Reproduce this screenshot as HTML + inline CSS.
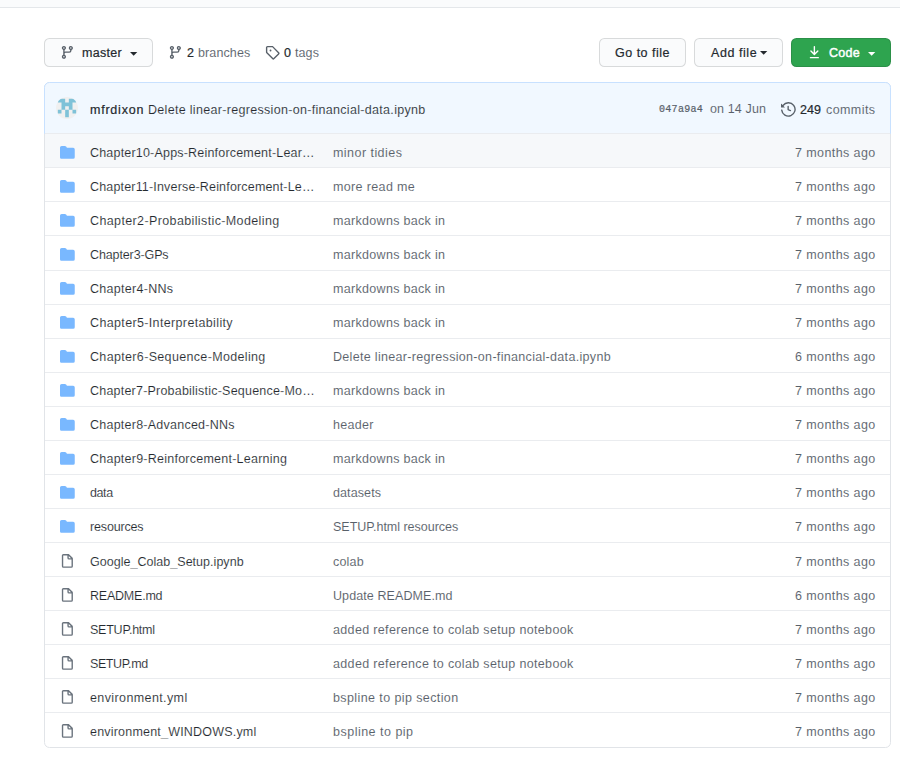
<!DOCTYPE html>
<html><head><meta charset="utf-8">
<style>
*{box-sizing:border-box;margin:0;padding:0}
html,body{width:900px;height:759px;background:#fff;overflow:hidden}
body{font-family:"Liberation Sans",sans-serif;font-size:12.5px;color:#24292e;position:relative}
.topbar{position:absolute;left:0;top:0;width:900px;height:8px;background:#fafbfc;border-bottom:1px solid #e4e7ea}
.btn{position:absolute;top:38px;height:29px;border:1px solid rgba(27,31,35,.15);border-radius:5.5px;background:#fafbfc}
.btn.green{background:#2ea44f}
.t{position:absolute;white-space:nowrap;line-height:20px;height:20px;-webkit-text-stroke:0.12px #fff}
.muted{color:#586069;-webkit-text-stroke-width:0.07px}
svg{position:absolute;display:block}
.box{position:absolute;left:44px;top:82px;width:847px;height:666px;border:1px solid #e1e4e8;border-radius:5.5px}
.hdr{position:absolute;left:44px;top:82px;width:847px;height:52px;background:#f1f8ff;border:1px solid #c8e1ff;border-radius:5.5px 5.5px 0 0}
.row{position:absolute;left:45px;width:845px;border-top:1px solid #eaecef}
.sb{-webkit-text-stroke:0.2px}
.md{-webkit-text-stroke:0.2px}
.mono{font-family:"Liberation Mono",monospace;font-size:10px}
.nm{overflow:hidden;text-overflow:ellipsis}
.row svg.ic{left:15px;top:11px}
.avatar{position:absolute;left:56px;top:97px;width:22px;height:22px;border-radius:50%;background:#f0f0f0;overflow:hidden}
</style></head><body>
<div class="topbar"></div>

<div class="btn" style="left:44px;width:109px"></div>
<div class="btn" style="left:599px;width:87px"></div>
<div class="btn" style="left:694px;width:89px"></div>
<div class="btn green" style="left:791px;width:100px"></div>

<svg viewBox="0 0 16 16" width="14.75" height="14.75" style="left:60px;top:45px"><path fill="#586069" fill-rule="evenodd" d="M11.75 2.5a.75.75 0 100 1.5.75.75 0 000-1.5zm-2.25.75a2.25 2.25 0 113 2.122V6A2.5 2.5 0 0110 8.5H6a1 1 0 00-1 1v1.128a2.251 2.251 0 11-1.5 0V5.372a2.25 2.25 0 111.5 0v1.836A2.492 2.492 0 016 7h4a1 1 0 001-1v-.628A2.25 2.25 0 019.5 3.25zM4.25 12a.75.75 0 100 1.5.75.75 0 000-1.5zM3.5 3.25a.75.75 0 111.5 0 .75.75 0 01-1.5 0z"/></svg>
<svg width="8" height="4" viewBox="0 0 8 4" style="left:129.8px;top:51.9px"><path fill="#24292e" d="M0 0h7.3L3.65 3.65z"/></svg>

<svg viewBox="0 0 16 16" width="14.75" height="14.75" style="left:168.3px;top:45px"><path fill="#586069" fill-rule="evenodd" d="M11.75 2.5a.75.75 0 100 1.5.75.75 0 000-1.5zm-2.25.75a2.25 2.25 0 113 2.122V6A2.5 2.5 0 0110 8.5H6a1 1 0 00-1 1v1.128a2.251 2.251 0 11-1.5 0V5.372a2.25 2.25 0 111.5 0v1.836A2.492 2.492 0 016 7h4a1 1 0 001-1v-.628A2.25 2.25 0 019.5 3.25zM4.25 12a.75.75 0 100 1.5.75.75 0 000-1.5zM3.5 3.25a.75.75 0 111.5 0 .75.75 0 01-1.5 0z"/></svg>
<svg viewBox="0 0 16 16" width="14.75" height="14.75" style="left:265px;top:45px"><path fill="#586069" fill-rule="evenodd" d="M2.5 7.775V2.75a.25.25 0 01.25-.25h5.025a.25.25 0 01.177.073l6.25 6.25a.25.25 0 010 .354l-5.025 5.025a.25.25 0 01-.354 0l-6.25-6.25a.25.25 0 01-.073-.177zm-1.5 0V2.75C1 1.784 1.784 1 2.75 1h5.025c.464 0 .91.184 1.238.513l6.25 6.25a1.75 1.75 0 010 2.474l-5.026 5.026a1.75 1.75 0 01-2.474 0l-6.25-6.25A1.75 1.75 0 011 7.775zM6 5a1 1 0 100 2 1 1 0 000-2z"/></svg>

<svg width="8" height="4" viewBox="0 0 8 4" style="left:759.8px;top:50.6px"><path fill="#24292e" d="M0 0h7.3L3.65 3.65z"/></svg>
<svg viewBox="0 0 16 16" width="14.75" height="14.75" style="left:807px;top:45px"><path fill="#fff" fill-rule="evenodd" d="M7.47 10.78a.75.75 0 001.06 0l3.75-3.75a.75.75 0 00-1.06-1.06L8.75 8.44V1.75a.75.75 0 00-1.5 0v6.69L4.78 5.97a.75.75 0 00-1.06 1.06l3.75 3.75zM3.75 13a.75.75 0 000 1.5h8.5a.75.75 0 000-1.5h-8.5z"/></svg>
<svg width="8" height="4" viewBox="0 0 8 4" style="left:867.8px;top:51.9px"><path fill="#fff" d="M0 0h7.3L3.65 3.65z"/></svg>

<div class="box"></div>
<div class="hdr"></div>
<div class="avatar"><svg viewBox="0 0 6 6" width="22" height="22" style="left:0;top:0"><path fill="#7fc2d8" transform="translate(.5 .5)" d="M0 0h2v1h-2zM3 0h2v1h-2zM1 0h1v3h-1zM3 0h1v3h-1zM1 1h3v1h-3zM0 3h1v1h-1zM4 3h1v1h-1zM2 3h1v2h-1z"/></svg></div>
<svg viewBox="0 0 16 16" width="14.75" height="14.75" style="left:781px;top:102px"><path fill="#586069" fill-rule="evenodd" d="M1.643 3.143L.427 1.927A.25.25 0 000 2.104V5.75c0 .138.112.25.25.25h3.646a.25.25 0 00.177-.427L2.715 4.215a6.5 6.5 0 11-1.18 4.458.75.75 0 10-1.493.154 8.001 8.001 0 101.6-5.684zM7.750 4a.75.75 0 01.75.75v2.992l2.028.812a.75.75 0 01-.557 1.392l-2.5-1A.75.75 0 017 8.25v-3.5A.75.75 0 017.75 4z"/></svg>

<div class="row" style="top:133px;height:34px;background:#f6f8fa"><svg class="ic" style="top:11px" viewBox="0 0 16 16" width="14.75" height="14.75"><path fill="#79b8ff" d="M1.75 1A1.75 1.75 0 000 2.75v10.5C0 14.216.784 15 1.75 15h12.5A1.75 1.75 0 0016 13.25v-8.5A1.75 1.75 0 0014.25 3h-6.5a.25.25 0 01-.2-.1l-.9-1.2c-.33-.44-.85-.7-1.4-.7h-3.5z"/></svg></div>
<div class="row" style="top:167px;height:34px"><svg class="ic" style="top:11px" viewBox="0 0 16 16" width="14.75" height="14.75"><path fill="#79b8ff" d="M1.75 1A1.75 1.75 0 000 2.75v10.5C0 14.216.784 15 1.75 15h12.5A1.75 1.75 0 0016 13.25v-8.5A1.75 1.75 0 0014.25 3h-6.5a.25.25 0 01-.2-.1l-.9-1.2c-.33-.44-.85-.7-1.4-.7h-3.5z"/></svg></div>
<div class="row" style="top:201px;height:34px"><svg class="ic" style="top:11px" viewBox="0 0 16 16" width="14.75" height="14.75"><path fill="#79b8ff" d="M1.75 1A1.75 1.75 0 000 2.75v10.5C0 14.216.784 15 1.75 15h12.5A1.75 1.75 0 0016 13.25v-8.5A1.75 1.75 0 0014.25 3h-6.5a.25.25 0 01-.2-.1l-.9-1.2c-.33-.44-.85-.7-1.4-.7h-3.5z"/></svg></div>
<div class="row" style="top:235px;height:35px"><svg class="ic" style="top:11px" viewBox="0 0 16 16" width="14.75" height="14.75"><path fill="#79b8ff" d="M1.75 1A1.75 1.75 0 000 2.75v10.5C0 14.216.784 15 1.75 15h12.5A1.75 1.75 0 0016 13.25v-8.5A1.75 1.75 0 0014.25 3h-6.5a.25.25 0 01-.2-.1l-.9-1.2c-.33-.44-.85-.7-1.4-.7h-3.5z"/></svg></div>
<div class="row" style="top:270px;height:34px"><svg class="ic" style="top:10px" viewBox="0 0 16 16" width="14.75" height="14.75"><path fill="#79b8ff" d="M1.75 1A1.75 1.75 0 000 2.75v10.5C0 14.216.784 15 1.75 15h12.5A1.75 1.75 0 0016 13.25v-8.5A1.75 1.75 0 0014.25 3h-6.5a.25.25 0 01-.2-.1l-.9-1.2c-.33-.44-.85-.7-1.4-.7h-3.5z"/></svg></div>
<div class="row" style="top:304px;height:34px"><svg class="ic" style="top:10px" viewBox="0 0 16 16" width="14.75" height="14.75"><path fill="#79b8ff" d="M1.75 1A1.75 1.75 0 000 2.75v10.5C0 14.216.784 15 1.75 15h12.5A1.75 1.75 0 0016 13.25v-8.5A1.75 1.75 0 0014.25 3h-6.5a.25.25 0 01-.2-.1l-.9-1.2c-.33-.44-.85-.7-1.4-.7h-3.5z"/></svg></div>
<div class="row" style="top:338px;height:34px"><svg class="ic" style="top:10px" viewBox="0 0 16 16" width="14.75" height="14.75"><path fill="#79b8ff" d="M1.75 1A1.75 1.75 0 000 2.75v10.5C0 14.216.784 15 1.75 15h12.5A1.75 1.75 0 0016 13.25v-8.5A1.75 1.75 0 0014.25 3h-6.5a.25.25 0 01-.2-.1l-.9-1.2c-.33-.44-.85-.7-1.4-.7h-3.5z"/></svg></div>
<div class="row" style="top:372px;height:34px"><svg class="ic" style="top:10px" viewBox="0 0 16 16" width="14.75" height="14.75"><path fill="#79b8ff" d="M1.75 1A1.75 1.75 0 000 2.75v10.5C0 14.216.784 15 1.75 15h12.5A1.75 1.75 0 0016 13.25v-8.5A1.75 1.75 0 0014.25 3h-6.5a.25.25 0 01-.2-.1l-.9-1.2c-.33-.44-.85-.7-1.4-.7h-3.5z"/></svg></div>
<div class="row" style="top:406px;height:34px"><svg class="ic" style="top:10px" viewBox="0 0 16 16" width="14.75" height="14.75"><path fill="#79b8ff" d="M1.75 1A1.75 1.75 0 000 2.75v10.5C0 14.216.784 15 1.75 15h12.5A1.75 1.75 0 0016 13.25v-8.5A1.75 1.75 0 0014.25 3h-6.5a.25.25 0 01-.2-.1l-.9-1.2c-.33-.44-.85-.7-1.4-.7h-3.5z"/></svg></div>
<div class="row" style="top:440px;height:34px"><svg class="ic" style="top:10px" viewBox="0 0 16 16" width="14.75" height="14.75"><path fill="#79b8ff" d="M1.75 1A1.75 1.75 0 000 2.75v10.5C0 14.216.784 15 1.75 15h12.5A1.75 1.75 0 0016 13.25v-8.5A1.75 1.75 0 0014.25 3h-6.5a.25.25 0 01-.2-.1l-.9-1.2c-.33-.44-.85-.7-1.4-.7h-3.5z"/></svg></div>
<div class="row" style="top:474px;height:34px"><svg class="ic" style="top:10px" viewBox="0 0 16 16" width="14.75" height="14.75"><path fill="#79b8ff" d="M1.75 1A1.75 1.75 0 000 2.75v10.5C0 14.216.784 15 1.75 15h12.5A1.75 1.75 0 0016 13.25v-8.5A1.75 1.75 0 0014.25 3h-6.5a.25.25 0 01-.2-.1l-.9-1.2c-.33-.44-.85-.7-1.4-.7h-3.5z"/></svg></div>
<div class="row" style="top:508px;height:34px"><svg class="ic" style="top:10px" viewBox="0 0 16 16" width="14.75" height="14.75"><path fill="#79b8ff" d="M1.75 1A1.75 1.75 0 000 2.75v10.5C0 14.216.784 15 1.75 15h12.5A1.75 1.75 0 0016 13.25v-8.5A1.75 1.75 0 0014.25 3h-6.5a.25.25 0 01-.2-.1l-.9-1.2c-.33-.44-.85-.7-1.4-.7h-3.5z"/></svg></div>
<div class="row" style="top:542px;height:34px"><svg class="ic" style="top:11px" viewBox="0 0 16 16" width="14.75" height="14.75"><path fill="#6a737d" fill-rule="evenodd" d="M3.75 1.5a.25.25 0 00-.25.25v11.5c0 .138.112.25.25.25h8.5a.25.25 0 00.25-.25V6H9.75A1.75 1.75 0 018 4.25V1.5H3.75zm5.75.56v2.19c0 .138.112.25.25.25h2.19L9.500 2.060zM2 1.75C2 .784 2.784 0 3.75 0h5.086c.464 0 .909.184 1.237.513l3.414 3.414c.329.328.513.773.513 1.237v8.086A1.75 1.750 0 0112.25 15h-8.5A1.75 1.75 0 012 13.25V1.75z"/></svg></div>
<div class="row" style="top:576px;height:34px"><svg class="ic" style="top:11px" viewBox="0 0 16 16" width="14.75" height="14.75"><path fill="#6a737d" fill-rule="evenodd" d="M3.75 1.5a.25.25 0 00-.25.25v11.5c0 .138.112.25.25.25h8.5a.25.25 0 00.25-.25V6H9.75A1.75 1.75 0 018 4.25V1.5H3.75zm5.75.56v2.19c0 .138.112.25.25.25h2.19L9.500 2.060zM2 1.75C2 .784 2.784 0 3.75 0h5.086c.464 0 .909.184 1.237.513l3.414 3.414c.329.328.513.773.513 1.237v8.086A1.75 1.750 0 0112.25 15h-8.5A1.75 1.75 0 012 13.25V1.75z"/></svg></div>
<div class="row" style="top:610px;height:34px"><svg class="ic" style="top:11px" viewBox="0 0 16 16" width="14.75" height="14.75"><path fill="#6a737d" fill-rule="evenodd" d="M3.75 1.5a.25.25 0 00-.25.25v11.5c0 .138.112.25.25.25h8.5a.25.25 0 00.25-.25V6H9.75A1.75 1.75 0 018 4.25V1.5H3.75zm5.75.56v2.19c0 .138.112.25.25.25h2.19L9.500 2.060zM2 1.75C2 .784 2.784 0 3.75 0h5.086c.464 0 .909.184 1.237.513l3.414 3.414c.329.328.513.773.513 1.237v8.086A1.75 1.750 0 0112.25 15h-8.5A1.75 1.75 0 012 13.25V1.75z"/></svg></div>
<div class="row" style="top:644px;height:34px"><svg class="ic" style="top:11px" viewBox="0 0 16 16" width="14.75" height="14.75"><path fill="#6a737d" fill-rule="evenodd" d="M3.75 1.5a.25.25 0 00-.25.25v11.5c0 .138.112.25.25.25h8.5a.25.25 0 00.25-.25V6H9.75A1.75 1.75 0 018 4.25V1.5H3.75zm5.75.56v2.19c0 .138.112.25.25.25h2.19L9.500 2.060zM2 1.75C2 .784 2.784 0 3.75 0h5.086c.464 0 .909.184 1.237.513l3.414 3.414c.329.328.513.773.513 1.237v8.086A1.75 1.750 0 0112.25 15h-8.5A1.75 1.75 0 012 13.25V1.75z"/></svg></div>
<div class="row" style="top:678px;height:34px"><svg class="ic" style="top:11px" viewBox="0 0 16 16" width="14.75" height="14.75"><path fill="#6a737d" fill-rule="evenodd" d="M3.75 1.5a.25.25 0 00-.25.25v11.5c0 .138.112.25.25.25h8.5a.25.25 0 00.25-.25V6H9.75A1.75 1.75 0 018 4.25V1.5H3.75zm5.75.56v2.19c0 .138.112.25.25.25h2.19L9.500 2.060zM2 1.75C2 .784 2.784 0 3.75 0h5.086c.464 0 .909.184 1.237.513l3.414 3.414c.329.328.513.773.513 1.237v8.086A1.75 1.750 0 0112.25 15h-8.5A1.75 1.75 0 012 13.25V1.75z"/></svg></div>
<div class="row" style="top:712px;height:35px;border-radius:0 0 5px 5px"><svg class="ic" style="top:11px" viewBox="0 0 16 16" width="14.75" height="14.75"><path fill="#6a737d" fill-rule="evenodd" d="M3.75 1.5a.25.25 0 00-.25.25v11.5c0 .138.112.25.25.25h8.5a.25.25 0 00.25-.25V6H9.75A1.75 1.75 0 018 4.25V1.5H3.75zm5.75.56v2.19c0 .138.112.25.25.25h2.19L9.500 2.060zM2 1.75C2 .784 2.784 0 3.75 0h5.086c.464 0 .909.184 1.237.513l3.414 3.414c.329.328.513.773.513 1.237v8.086A1.75 1.750 0 0112.25 15h-8.5A1.75 1.75 0 012 13.25V1.75z"/></svg></div>
<span id="master" class="t md" style="left:82.00px;top:43px;letter-spacing:0.300px;">master</span>
<span id="cnt2" class="t sb" style="left:187.00px;top:43px;">2</span>
<span id="branches" class="t muted" style="left:198.00px;top:43px;letter-spacing:0.114px;">branches</span>
<span id="cnt0" class="t sb" style="left:284.00px;top:43px;">0</span>
<span id="tags" class="t muted" style="left:295.00px;top:43px;letter-spacing:0.100px;">tags</span>
<span id="gotofile" class="t md" style="left:615.00px;top:43px;letter-spacing:0.500px;">Go to file</span>
<span id="addfile" class="t md" style="left:711.00px;top:43px;letter-spacing:0.557px;">Add file</span>
<span id="code" class="t sb" style="left:829.00px;top:43px;letter-spacing:0.233px;color:#fff;-webkit-text-stroke-width:0.45px">Code</span>
<span id="user" class="t sb" style="left:90.00px;top:100px;letter-spacing:0.771px;">mfrdixon</span>
<span id="cmsg" class="t " style="left:148.00px;top:100px;letter-spacing:0.311px;-webkit-text-stroke-color:#f1f8ff;">Delete linear-regression-on-financial-data.ipynb</span>
<span id="sha" class="t muted mono" style="left:659.00px;top:100px;letter-spacing:0.300px;-webkit-text-stroke:0.2px #586069">047a9a4</span>
<span id="date" class="t muted" style="left:710.00px;top:99px;letter-spacing:0.125px;-webkit-text-stroke-color:#f1f8ff;">on 14 Jun</span>
<span id="n249" class="t sb" style="left:800.00px;top:100px;">249</span>
<span id="commits" class="t muted" style="left:826.00px;top:100px;letter-spacing:0.417px;-webkit-text-stroke-color:#f1f8ff;">commits</span>
<span id="n0" class="t nm" style="left:90.00px;top:143px;letter-spacing:0.194px;width:228.34px;-webkit-text-stroke-color:#f6f8fa;">Chapter10-Apps-Reinforcement-Learning</span>
<span id="m0" class="t muted" style="left:333.00px;top:143px;letter-spacing:0.455px;-webkit-text-stroke-color:#f6f8fa;">minor tidies</span>
<span id="a0" class="t muted" style="left:795.00px;top:143px;letter-spacing:0.409px;-webkit-text-stroke-color:#f6f8fa;">7 months ago</span>
<span id="n1" class="t nm" style="left:90.00px;top:177px;letter-spacing:0.171px;width:228.17px;">Chapter11-Inverse-Reinforcement-Learning</span>
<span id="m1" class="t muted" style="left:333.00px;top:177px;letter-spacing:0.364px;">more read me</span>
<span id="a1" class="t muted" style="left:795.00px;top:177px;letter-spacing:0.409px;">7 months ago</span>
<span id="n2" class="t " style="left:90.00px;top:211px;letter-spacing:0.377px;">Chapter2-Probabilistic-Modeling</span>
<span id="m2" class="t muted" style="left:333.00px;top:211px;letter-spacing:0.312px;">markdowns back in</span>
<span id="a2" class="t muted" style="left:795.00px;top:211px;letter-spacing:0.409px;">7 months ago</span>
<span id="n3" class="t " style="left:90.00px;top:245px;letter-spacing:-0.118px;">Chapter3-GPs</span>
<span id="m3" class="t muted" style="left:333.00px;top:245px;letter-spacing:0.312px;">markdowns back in</span>
<span id="a3" class="t muted" style="left:795.00px;top:245px;letter-spacing:0.409px;">7 months ago</span>
<span id="n4" class="t " style="left:90.00px;top:279px;letter-spacing:0.291px;">Chapter4-NNs</span>
<span id="m4" class="t muted" style="left:333.00px;top:279px;letter-spacing:0.312px;">markdowns back in</span>
<span id="a4" class="t muted" style="left:795.00px;top:279px;letter-spacing:0.409px;">7 months ago</span>
<span id="n5" class="t " style="left:90.00px;top:313px;letter-spacing:0.354px;">Chapter5-Interpretability</span>
<span id="m5" class="t muted" style="left:333.00px;top:313px;letter-spacing:0.312px;">markdowns back in</span>
<span id="a5" class="t muted" style="left:795.00px;top:313px;letter-spacing:0.409px;">7 months ago</span>
<span id="n6" class="t " style="left:90.00px;top:347px;letter-spacing:0.340px;">Chapter6-Sequence-Modeling</span>
<span id="m6" class="t muted" style="left:333.00px;top:347px;letter-spacing:0.319px;">Delete linear-regression-on-financial-data.ipynb</span>
<span id="a6" class="t muted" style="left:795.00px;top:347px;letter-spacing:0.409px;">6 months ago</span>
<span id="n7" class="t nm" style="left:90.00px;top:381px;letter-spacing:0.215px;width:228.58px;">Chapter7-Probabilistic-Sequence-Modeling</span>
<span id="m7" class="t muted" style="left:333.00px;top:381px;letter-spacing:0.312px;">markdowns back in</span>
<span id="a7" class="t muted" style="left:795.00px;top:381px;letter-spacing:0.409px;">7 months ago</span>
<span id="n8" class="t " style="left:90.00px;top:415px;letter-spacing:0.240px;">Chapter8-Advanced-NNs</span>
<span id="m8" class="t muted" style="left:333.00px;top:415px;letter-spacing:0.280px;">header</span>
<span id="a8" class="t muted" style="left:795.00px;top:415px;letter-spacing:0.409px;">7 months ago</span>
<span id="n9" class="t " style="left:90.00px;top:449px;letter-spacing:0.240px;">Chapter9-Reinforcement-Learning</span>
<span id="m9" class="t muted" style="left:333.00px;top:449px;letter-spacing:0.312px;">markdowns back in</span>
<span id="a9" class="t muted" style="left:795.00px;top:449px;letter-spacing:0.409px;">7 months ago</span>
<span id="n10" class="t " style="left:90.00px;top:483px;letter-spacing:-0.400px;">data</span>
<span id="m10" class="t muted" style="left:333.00px;top:483px;letter-spacing:0.100px;">datasets</span>
<span id="a10" class="t muted" style="left:795.00px;top:483px;letter-spacing:0.409px;">7 months ago</span>
<span id="n11" class="t " style="left:90.00px;top:517px;letter-spacing:-0.163px;">resources</span>
<span id="m11" class="t muted" style="left:333.00px;top:517px;letter-spacing:-0.016px;">SETUP.html resources</span>
<span id="a11" class="t muted" style="left:795.00px;top:517px;letter-spacing:0.409px;">7 months ago</span>
<span id="n12" class="t " style="left:90.00px;top:552px;letter-spacing:0.030px;">Google_Colab_Setup.ipynb</span>
<span id="m12" class="t muted" style="left:333.00px;top:552px;letter-spacing:0.175px;">colab</span>
<span id="a12" class="t muted" style="left:795.00px;top:552px;letter-spacing:0.409px;">7 months ago</span>
<span id="n13" class="t " style="left:90.00px;top:586px;letter-spacing:-0.225px;">README.md</span>
<span id="m13" class="t muted" style="left:333.00px;top:586px;letter-spacing:0.093px;">Update README.md</span>
<span id="a13" class="t muted" style="left:795.00px;top:586px;letter-spacing:0.409px;">6 months ago</span>
<span id="n14" class="t " style="left:90.00px;top:620px;letter-spacing:-0.233px;">SETUP.html</span>
<span id="m14" class="t muted" style="left:333.00px;top:620px;letter-spacing:0.342px;">added reference to colab setup notebook</span>
<span id="a14" class="t muted" style="left:795.00px;top:620px;letter-spacing:0.409px;">7 months ago</span>
<span id="n15" class="t " style="left:90.00px;top:654px;letter-spacing:-0.400px;">SETUP.md</span>
<span id="m15" class="t muted" style="left:333.00px;top:654px;letter-spacing:0.342px;">added reference to colab setup notebook</span>
<span id="a15" class="t muted" style="left:795.00px;top:654px;letter-spacing:0.409px;">7 months ago</span>
<span id="n16" class="t " style="left:90.00px;top:688px;letter-spacing:0.393px;">environment.yml</span>
<span id="m16" class="t muted" style="left:333.00px;top:688px;letter-spacing:0.400px;">bspline to pip section</span>
<span id="a16" class="t muted" style="left:795.00px;top:688px;letter-spacing:0.409px;">7 months ago</span>
<span id="n17" class="t " style="left:90.00px;top:722px;letter-spacing:0.200px;">environment_WINDOWS.yml</span>
<span id="m17" class="t muted" style="left:333.00px;top:722px;letter-spacing:0.492px;">bspline to pip</span>
<span id="a17" class="t muted" style="left:795.00px;top:722px;letter-spacing:0.409px;">7 months ago</span>
</body></html>
